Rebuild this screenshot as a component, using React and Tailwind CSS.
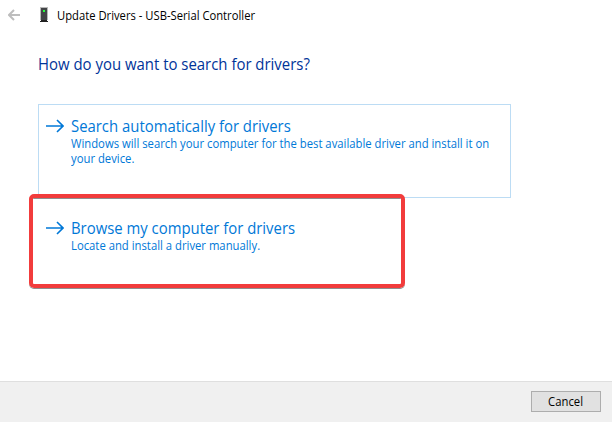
function OptionArrow() {
  return (
    <svg width="18" height="14" viewBox="0 0 18 14" fill="none" stroke="#0078d7" strokeWidth="1.6" className="mt-[14px] shrink-0">
      <path d="M0 7H17M11 1L17 7L11 13" />
    </svg>
  );
}

function Option({ title, lines, className }) {
  return (
    <button className={`flex w-[473px] items-start gap-[7px] border pl-[7px] text-left text-[#0078d7] ${className}`}>
      <OptionArrow />
      <span className="block whitespace-nowrap pt-[11px]">
        <span className="block origin-left scale-x-[0.93] text-[16px] leading-[20px]">{title}</span>
        {lines.map((line) => (
          <span key={line} className="block origin-left scale-x-[0.941] text-[12px] leading-[15px]">{line}</span>
        ))}
      </span>
    </button>
  );
}

export default function App() {
  return (
    <div className="relative flex h-[422px] w-[612px] flex-col overflow-hidden bg-white font-['Open_Sans','Noto_Sans',sans-serif]">
      <header className="flex h-[29px] items-center pl-2">
        <svg width="13" height="12" viewBox="0 0 13 12" fill="none" stroke="#bdbdbd" strokeWidth="2">
          <path d="M12 6H1M6 1L1 6L6 11" />
        </svg>
        <svg width="8" height="15" viewBox="0 0 8 15" className="ml-[19px]" shapeRendering="crispEdges">
          <path d="M0 0H8V13H0Z" fill="#b9b9b9" />
          <path d="M1 1H7V13H1Z" fill="#434547" />
          <path d="M0 14H8V15H0ZM1 13H7V14H1Z" fill="#222" />
          <path d="M3 3H5V5H3Z" fill="#28ff3c" />
        </svg>
        <span className="ml-[9px] mt-[2px] origin-left scale-x-[0.936] whitespace-nowrap text-[12px] leading-[16px] text-black">Update Drivers - USB-Serial Controller</span>
      </header>
      <main className="flex flex-1 flex-col items-start pl-[38px]">
        <h1 className="mt-[25px] h-[20px] origin-left scale-x-[0.933] whitespace-nowrap text-[16px] leading-[20px] text-[#003399]">How do you want to search for drivers?</h1>
        <Option
          className="mt-[30px] h-[94px] border-[#bcdcf4]"
          title="Search automatically for drivers"
          lines={["Windows will search your computer for the best available driver and install it on", "your device."]}
        />
        <Option
          className="mt-[8px] h-[80px] border-transparent"
          title="Browse my computer for drivers"
          lines={["Locate and install a driver manually."]}
        />
      </main>
      <div className="pointer-events-none absolute left-[29px] top-[194px] h-[94px] w-[376px] rounded-[5px] border-4 border-[#f23c3c] shadow-[0_1px_0_#8f8f8f,inset_0_1px_0_#8f8f8f]">
        <div className="mt-px h-[4px] bg-white" />
      </div>
      <footer className="flex h-[41px] items-start justify-end border-t border-[#dfdfdf] bg-[#f0f0f0] pr-[11px] pt-[9px]">
        <button className="h-[21px] w-[70px] border border-[#adadad] bg-[#e1e1e1] text-[12px] leading-[19px] text-black">
          <span className="inline-block scale-x-[0.94]">Cancel</span>
        </button>
      </footer>
    </div>
  );
}
